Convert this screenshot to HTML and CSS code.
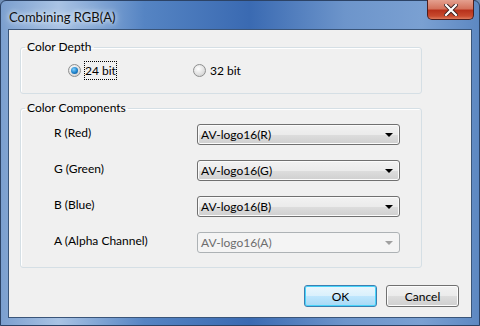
FILE: index.html
```html
<!DOCTYPE html>
<html lang="en">
<head>
    <meta charset="UTF-8">
    <title>Combining RGB(A)</title>
    <link rel="stylesheet" href="styles.css">
</head>
<body>
    <div class="window">
        <div class="titlebar">
            <span class="title">Combining RGB(A)</span>
            <button class="close-btn">
                <svg width="14" height="12" viewBox="0 0 14 12">
                    <path d="M2 1 L12 11 M12 1 L2 11" stroke="#3a2020" stroke-width="4" stroke-linecap="square"/>
                    <path d="M2 1 L12 11 M12 1 L2 11" stroke="#ffffff" stroke-width="2.2" stroke-linecap="square"/>
                </svg>
            </button>
        </div>

        <div class="client">
            <fieldset class="group depth">
                <legend>Color Depth</legend>
                <div class="radio-row">
                    <label class="radio checked"><span class="dot"></span><span class="focus">24 bit</span></label>
                    <label class="radio"><span class="dot"></span><span>32 bit</span></label>
                </div>
            </fieldset>

            <fieldset class="group components">
                <legend>Color Components</legend>
                <div class="comp-row">
                    <span class="comp-label">R (Red)</span>
                    <div class="combo"><span>AV-logo16(R)</span><span class="arrow"></span></div>
                </div>
                <div class="comp-row">
                    <span class="comp-label">G (Green)</span>
                    <div class="combo"><span>AV-logo16(G)</span><span class="arrow"></span></div>
                </div>
                <div class="comp-row">
                    <span class="comp-label">B (Blue)</span>
                    <div class="combo"><span>AV-logo16(B)</span><span class="arrow"></span></div>
                </div>
                <div class="comp-row">
                    <span class="comp-label">A (Alpha Channel)</span>
                    <div class="combo disabled"><span>AV-logo16(A)</span><span class="arrow"></span></div>
                </div>
            </fieldset>

            <div class="buttons">
                <button class="btn default">OK</button>
                <button class="btn">Cancel</button>
            </div>
        </div>
    </div>
</body>
</html>
```

FILE: styles.css
```css
body {
    margin: 0;
    font-family: Lato, "Liberation Sans", Arial, sans-serif;
    font-size: 12px;
    color: #000;
    background: #6f8fb8;
}

.window {
    width: 480px;
    height: 326px;
    box-sizing: border-box;
    padding: 0 7px 7px 7px;
    border: 1px solid #2c4366;
    border-radius: 6px 6px 0 0;
    background: linear-gradient(90deg, #7b9fcf 0%, #a9c3e4 12%, #5584c3 30%, #3a6ab2 52%, #6d95cb 72%, #7aa0d2 88%, #5d88c2 100%);
}

.titlebar {
    height: 28px;
    display: flex;
    justify-content: space-between;
    align-items: flex-start;
}

.title {
    margin-top: 8px;
    padding-left: 1px;
    font-size: 13px;
    color: #101010;
    text-shadow: 0 0 8px #e8f0fa, 0 0 4px #e8f0fa;
}

.close-btn {
    width: 47px;
    height: 20px;
    margin-top: -1px;
    margin-right: -2px;
    border: 1px solid #4c1f1f;
    border-top: none;
    border-radius: 0 0 5px 5px;
    background: linear-gradient(180deg, #e4a08f 0%, #d4735d 45%, #b8321c 55%, #c84a2e 85%, #dd7a5c 100%);
    display: flex;
    align-items: center;
    justify-content: center;
    padding: 0;
}

.client {
    height: 289px;
    box-sizing: border-box;
    border: 1px solid #3a5579;
    background: #f0f0f0;
    padding: 10px 49px 0 11px;
}

.group {
    margin: 0;
    border: 1px solid #d5dfe5;
    border-radius: 3px;
    padding: 0;
    box-shadow: inset 1px 1px 0 #fff;
}

.group legend {
    margin-left: 4px;
    padding: 0 2px;
    line-height: 14px;
}

.depth {
    height: 52px;
}

.radio-row {
    display: flex;
    padding: 8px 0 0 47px;
}

.radio {
    display: flex;
    align-items: center;
    width: 125px;
}

.dot {
    width: 11px;
    height: 11px;
    border: 1px solid #8e8f8f;
    border-radius: 50%;
    background: radial-gradient(circle at 40% 35%, #ffffff 0%, #e4e4e4 50%, #c8c8c8 100%);
    margin-right: 4px;
    position: relative;
}

.checked .dot::after {
    content: "";
    position: absolute;
    left: 2px;
    top: 2px;
    width: 7px;
    height: 7px;
    border-radius: 50%;
    background: radial-gradient(circle at 40% 35%, #7fd0ff 0%, #1d80c8 55%, #0b4d8a 100%);
}

.focus {
    outline: 1px dotted #000;
    outline-offset: 0;
    padding: 1px 0;
}

.components {
    margin-top: 7px;
    height: 156px;
    padding: 9px 0 0 0;
}

.comp-row {
    display: flex;
    align-items: center;
    height: 21px;
    margin-bottom: 15px;
}

.comp-label {
    width: 143px;
    padding-left: 33px;
    margin-top: -5px;
}

.combo {
    width: 203px;
    height: 21px;
    box-sizing: border-box;
    border: 1px solid #707070;
    border-radius: 3px;
    background: linear-gradient(180deg, #f2f2f2 0%, #ebebeb 50%, #dddddd 51%, #cfcfcf 100%);
    display: flex;
    align-items: center;
    justify-content: space-between;
    padding: 0 6px 0 3px;
    box-shadow: inset 0 0 0 1px #fbfbfb;
}

.arrow {
    width: 0;
    height: 0;
    border-left: 4px solid transparent;
    border-right: 4px solid transparent;
    border-top: 4px solid #000;
}

.combo.disabled {
    border-color: #adb2b5;
    background: #f4f4f4;
    color: #6d6d6d;
    box-shadow: none;
}

.combo.disabled .arrow {
    border-top-color: #a0a0a0;
}

.buttons {
    display: flex;
    justify-content: flex-end;
    gap: 9px;
    margin-top: 17px;
    margin-right: -37px;
}

.btn {
    width: 73px;
    height: 22px;
    font-family: inherit;
    font-size: 12px;
    border: 1px solid #707070;
    border-radius: 3px;
    background: linear-gradient(180deg, #f2f2f2 0%, #ebebeb 50%, #dddddd 51%, #cfcfcf 100%);
    box-shadow: inset 0 0 0 1px #fcfcfc;
    padding: 0;
}

.btn.default {
    border-color: #3c7fb1;
    background: linear-gradient(180deg, #eaf6fd 0%, #d9f0fc 50%, #bee6fd 51%, #a7d9f5 100%);
    box-shadow: inset 0 0 0 1px #48d4fa;
}
```
